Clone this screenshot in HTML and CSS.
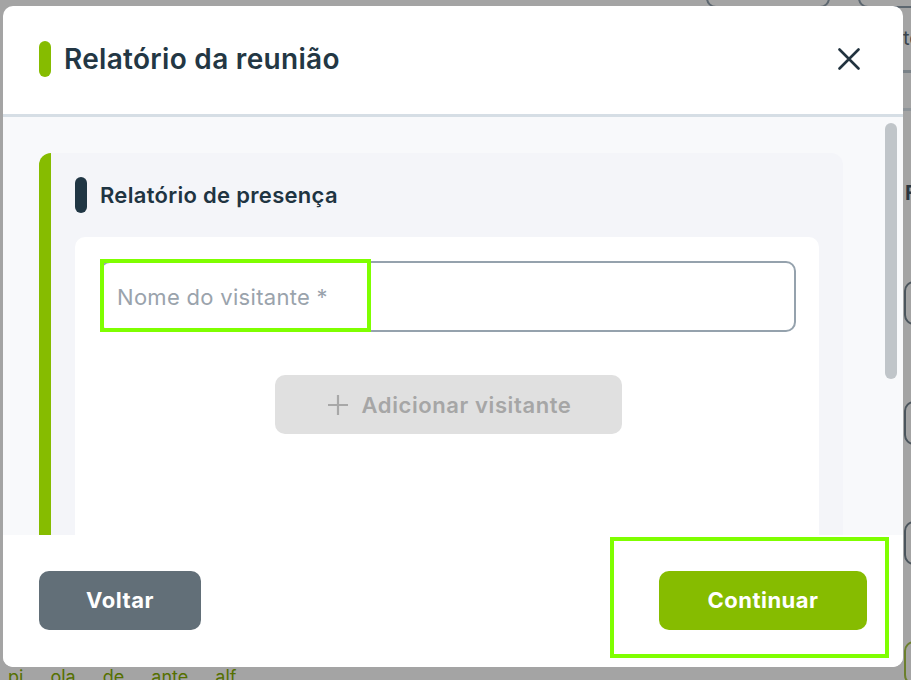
FILE: index.html
```html
<!DOCTYPE html>
<html lang="pt">
<head>
<meta charset="utf-8">
<title>Relatório da reunião</title>
<link rel="stylesheet" href="styles.css">
</head>
<body>
<div class="backdrop">
  <div class="bg-box bg-box-a"></div>
  <div class="bg-box bg-box-b"></div>
  <div class="bg-text bg-te">te</div>
  <div class="bg-line bg-line-1"></div>
  <div class="bg-line bg-line-2"></div>
  <div class="bg-text bg-f">F</div>
  <div class="bg-pill bg-pill-1"></div>
  <div class="bg-pill bg-pill-2"></div>
  <div class="bg-pill bg-pill-3"></div>
  <div class="bg-pill bg-pill-4"></div>
  <div class="bg-text bg-bottom">pi ola de ante alf</div>
</div>

<div class="modal">
  <header class="modal-header">
    <span class="pill pill-green"></span>
    <h1 class="modal-title">Relatório da reunião</h1>
    <button class="close-btn" aria-label="Fechar">
      <svg width="22" height="22" viewBox="0 0 22 22"><path d="M1.5 1.5 L20.5 20.5 M20.5 1.5 L1.5 20.5" stroke="#22333f" stroke-width="2.6" stroke-linecap="round" fill="none"/></svg>
    </button>
  </header>
  <main class="modal-body">
    <section class="card">
      <div class="card-head">
        <span class="pill pill-dark"></span>
        <h2 class="card-title">Relatório de presença</h2>
      </div>
      <div class="card-inner">
        <div class="input">Nome do visitante *</div>
        <div class="add-row">
          <button class="add-btn">
            <svg width="22" height="22" viewBox="0 0 22 22"><path d="M11 1 V21 M1 11 H21" stroke="#a8a8a8" stroke-width="2.2" fill="none"/></svg>
            <span>Adicionar visitante</span>
          </button>
        </div>
      </div>
    </section>
    <div class="scroll-thumb"></div>
  </main>
  <footer class="modal-footer">
    <button class="btn btn-back">Voltar</button>
    <button class="btn btn-next">Continuar</button>
  </footer>
</div>

<div class="highlight hl-input"></div>
<div class="highlight hl-next"></div>
</body>
</html>
```

FILE: styles.css
```css
* { box-sizing: border-box; }
html, body { margin: 0; padding: 0; }
body {
  width: 911px;
  height: 680px;
  overflow: hidden;
  background: #a4a4a4;
  font-family: Inter, "Noto Sans", sans-serif;
  position: relative;
}

/* faint page behind overlay */
.backdrop { position: absolute; inset: 0; }
.bg-box { position: absolute; top: -12px; height: 20px; border: 2px solid #5d6770; border-radius: 10px; }
.bg-box-a { left: 706px; width: 124px; }
.bg-box-b { left: 858px; width: 80px; }
.bg-text { position: absolute; color: #2a3640; font-size: 20px; font-weight: 700; }
.bg-te { left: 903px; top: 26px; font-weight: 400; color: #3a444c; }
.bg-f { left: 905px; top: 181px; }
.bg-line { position: absolute; left: 903px; width: 10px; height: 3px; background: #7a8288; }
.bg-line-1 { top: 70px; }
.bg-line-2 { top: 108px; background: #8e9499; }
.bg-pill { position: absolute; left: 904px; width: 30px; height: 44px; border: 2px solid #4b555d; border-radius: 10px; }
.bg-pill-1 { top: 281px; }
.bg-pill-2 { top: 401px; }
.bg-pill-3 { top: 521px; }
.bg-pill-4 { top: 641px; border-color: #6b7f2c; }
.bg-bottom { left: 8px; top: 666px; font-size: 18px; color: #557000; font-weight: 400; word-spacing: 22px; }

/* modal */
.modal {
  position: absolute;
  left: 3px;
  top: 6px;
  width: 900px;
  height: 661px;
  background: #ffffff;
  border-radius: 10px;
  overflow: hidden;
  display: flex;
  flex-direction: column;
}

.modal-header {
  height: 111px;
  flex: none;
  display: flex;
  align-items: center;
  padding: 0 43px 3px 36px;
  border-bottom: 3px solid #d6dee5;
}
.pill { display: block; width: 12px; height: 36px; border-radius: 6px; flex: none; }
.pill-green { background: #86bc00; }
.pill-dark { background: #203644; }
.modal-title {
  margin: 0 0 0 13px;
  flex: 1;
  font-size: 28px;
  font-weight: 600;
  color: #233744;
  letter-spacing: 0.3px;
}
.close-btn {
  border: 0;
  background: none;
  padding: 0;
  width: 22px;
  height: 22px;
  display: flex;
  cursor: pointer;
}

.modal-body {
  flex: 1;
  background: #f8f9fb;
  padding: 36px 0 0 36px;
  position: relative;
  overflow: hidden;
}
.scroll-thumb {
  position: absolute;
  right: 6px;
  top: 6px;
  width: 12px;
  height: 256px;
  border-radius: 6px;
  background: #c0c5c9;
}

.card {
  width: 804px;
  background: #f4f5f9;
  border-left: 12px solid #86bc00;
  border-radius: 12px 12px 0 0;
  padding: 24px 24px 0 24px;
  min-height: 420px;
}
.card-head { display: flex; align-items: center; gap: 13px; height: 36px; }
.card-title {
  margin: 0;
  font-size: 22px;
  font-weight: 600;
  color: #1f3442;
  letter-spacing: 0.3px;
}
.card-inner {
  margin-top: 24px;
  background: #ffffff;
  border-radius: 10px 10px 0 0;
  padding: 24px 23px 0 25px;
  min-height: 320px;
}
.input {
  height: 71px;
  border: 2px solid #95a2ad;
  border-radius: 10px;
  display: flex;
  align-items: center;
  padding-left: 15px;
  font-size: 22px;
  color: #9aa3ac;
  letter-spacing: 0.3px;
}
.add-row { display: flex; justify-content: center; margin-top: 43px; }
.add-btn {
  width: 347px;
  height: 59px;
  border: 0;
  border-radius: 10px;
  background: #e0e0e0;
  color: #a6a6a6;
  font-family: inherit;
  font-size: 22px;
  font-weight: 600;
  letter-spacing: 0.6px;
  display: flex;
  align-items: center;
  justify-content: center;
  gap: 13px;
  padding: 0 0 0 2px;
}

.modal-footer {
  height: 132px;
  flex: none;
  display: flex;
  align-items: center;
  justify-content: space-between;
  padding: 0 36px 2px 36px;
  background: #ffffff;
}
.btn {
  height: 59px;
  border: 0;
  border-radius: 10px;
  color: #ffffff;
  font-family: inherit;
  font-size: 22px;
  font-weight: 700;
  letter-spacing: 0.5px;
  cursor: pointer;
}
.btn-back { width: 162px; background: #626f78; }
.btn-next { width: 208px; background: #86bc00; }

/* annotation highlights over content */
.highlight { position: absolute; border: 4px solid #7fff00; pointer-events: none; }
.hl-input { left: 100px; top: 259px; width: 271px; height: 73px; }
.hl-next { left: 610px; top: 537px; width: 279px; height: 121px; }
```
